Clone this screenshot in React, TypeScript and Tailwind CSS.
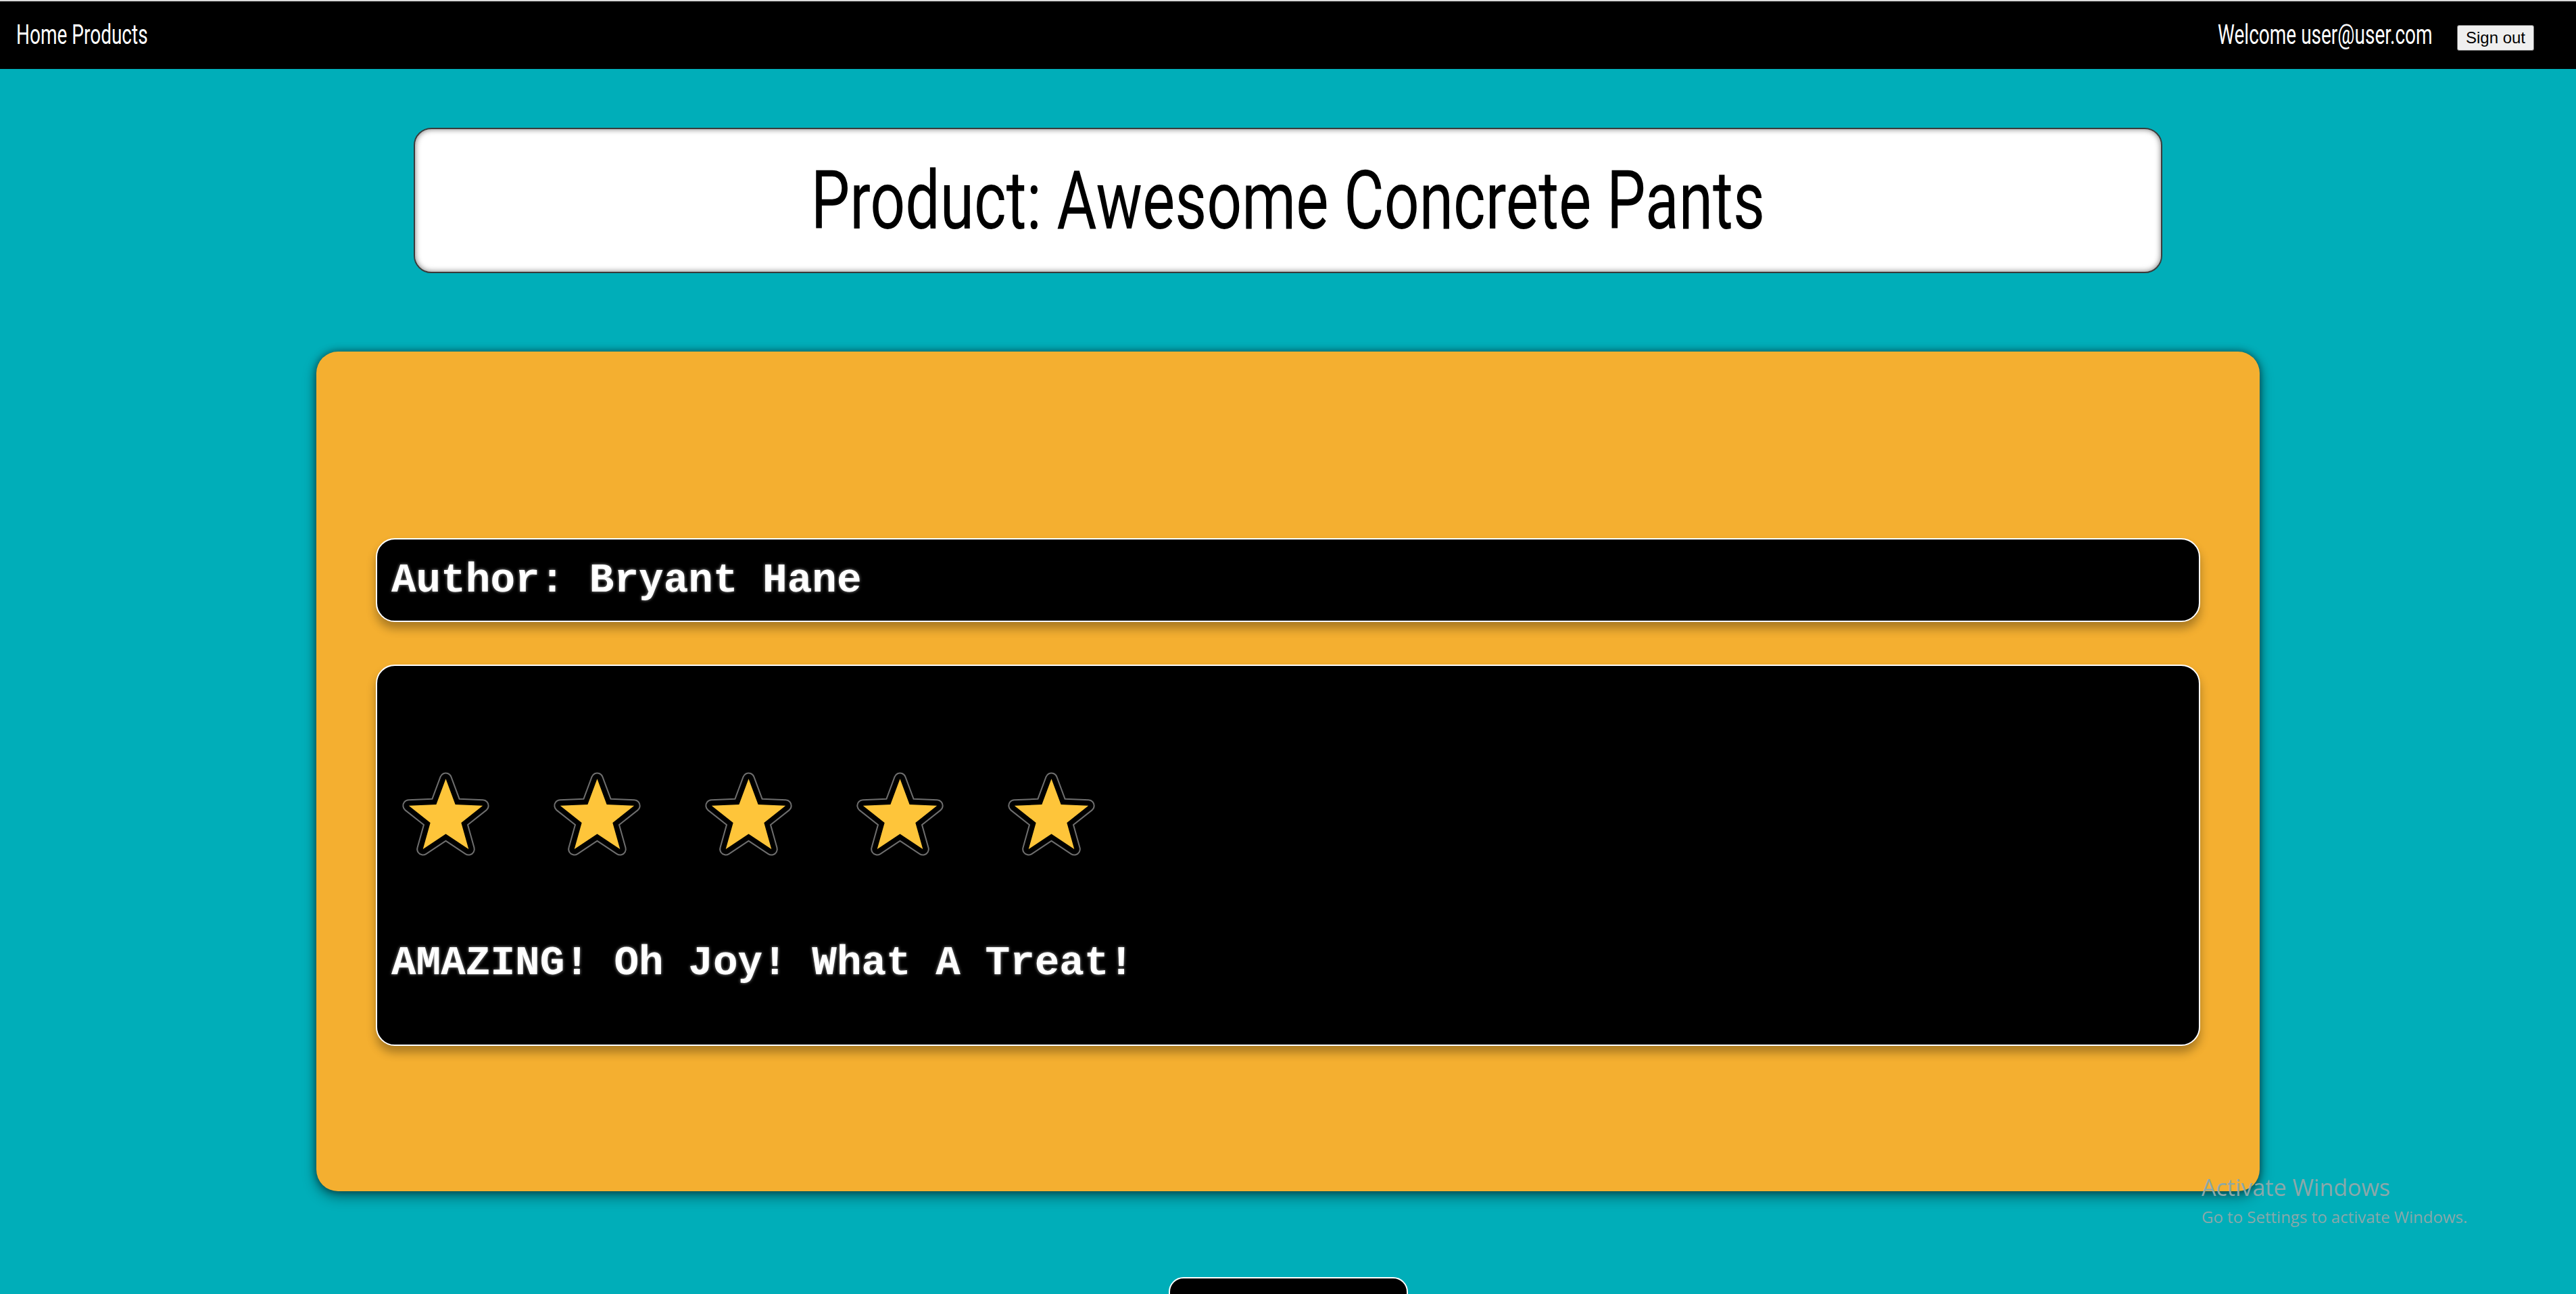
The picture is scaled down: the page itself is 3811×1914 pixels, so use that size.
import React from 'react';

const Star = () => {
  const d =
    'M63.5 9 L77.61 47.08 L118.19 48.73 L86.33 73.92 L97.3 113.02 L63.5 90.5 L29.7 113.02 L40.67 73.92 L8.81 48.73 L49.39 47.08 Z';
  return (
    <svg width="126" height="122" viewBox="0 0 126 122" className="shrink-0 overflow-visible">
      <path d={d} fill="none" stroke="#8a8a8a" strokeWidth="19" strokeLinejoin="round" opacity="0.8" />
      <path d={d} fill="none" stroke="#000" strokeWidth="15" strokeLinejoin="round" />
      <path d={d} fill="#FEC53A" />
    </svg>
  );
};

const App = () => {
  return (
    <div className="relative min-h-screen bg-[#00AEB9] overflow-hidden">
      <nav className="h-[102px] bg-black border-t-2 border-[#d9d9d9] flex items-center justify-between pl-6 pr-[62px] font-['Roboto',sans-serif] text-white text-[40px]">
        <span className="inline-block origin-left scale-x-[0.7]">Home Products</span>
        <div className="flex items-center gap-[36px]">
          <span className="inline-block origin-right scale-x-[0.7]">Welcome user@user.com</span>
          <button className="mt-[8px] w-[114px] h-[38px] bg-[#efefef] border border-[#767676] rounded-[3px] text-black text-[24px] font-['Liberation_Sans',Arial,sans-serif]">
            Sign out
          </button>
        </div>
      </nav>

      <main className="flex flex-col items-center">
        <div className="mt-[87px] w-[2587px] h-[215px] bg-white border-2 border-[#3a3a3a] rounded-[26px] shadow-[inset_0_0_8px_rgba(0,0,0,0.55)] flex items-center justify-center">
          <h1 className="inline-block scale-x-[0.76] text-[120px] leading-none text-black font-['Roboto',sans-serif] whitespace-nowrap">
            Product: Awesome Concrete Pants
          </h1>
        </div>

        <div className="mt-[116px] w-[2875px] h-[1242px] bg-[#F4AF30] rounded-[32px] px-[88px] pt-[276px] shadow-[0_0_12px_rgba(0,0,0,0.5),0_8px_20px_rgba(0,0,0,0.4)] font-['Liberation_Mono','Courier_New',monospace] font-bold text-white">
          <div className="h-[124px] bg-black border-2 border-white rounded-[28px] flex items-center pl-[21px] shadow-[0_10px_14px_rgba(0,0,0,0.3)]">
            <span className="text-[61px] leading-[61px] [text-shadow:0_0_4px_rgba(200,200,200,0.8)]">
              Author: Bryant Hane
            </span>
          </div>

          <div className="mt-[63px] h-[564px] bg-black border-2 border-white rounded-[28px] pl-[21px] shadow-[0_10px_14px_rgba(0,0,0,0.3)]">
            <div className="flex gap-[98px] pl-[17px] pt-[158px]">
              <Star />
              <Star />
              <Star />
              <Star />
              <Star />
            </div>
            <p className="mt-[129px] text-[61px] leading-[61px] [text-shadow:0_0_4px_rgba(200,200,200,0.8)]">
              AMAZING! Oh Joy! What A Treat!
            </p>
          </div>
        </div>

        <div className="mt-[127px] w-[354px] h-[70px] bg-black border-2 border-white rounded-t-[22px]" />
      </main>

      <div className="absolute left-[3257px] top-[1734px] text-[#8aa8aa] font-['Open_Sans','Noto_Sans',sans-serif]">
        <div className="text-[34px] leading-[44px]">Activate Windows</div>
        <div className="text-[24px] leading-[32px] mt-[6px]">Go to Settings to activate Windows.</div>
      </div>
    </div>
  );
};

export default App;
